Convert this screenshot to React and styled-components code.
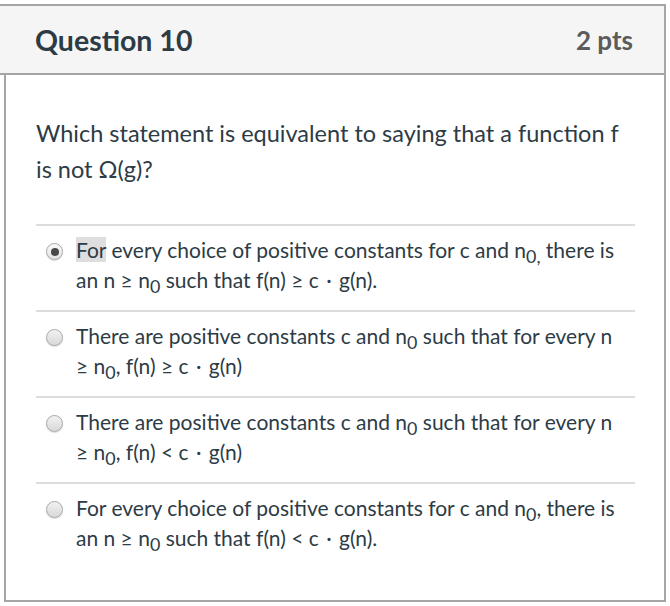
import React from "react";
import styled, { createGlobalStyle } from "styled-components";

const Global = createGlobalStyle`
  html, body { margin: 0; padding: 0; background: #fff; }
  body { font-family: Lato, "Open Sans", sans-serif; color: #2d3b45; }
  sub { font-size: 0.85em; vertical-align: -0.3em; line-height: 0; }
`;

const Page = styled.div`
  width: 670px;
  height: 606px;
  padding-top: 4px;
  box-sizing: border-box;
`;

const Card = styled.div`
  width: 666px;
  display: flex;
  flex-direction: column;
`;

const Header = styled.div`
  height: 67px;
  background: #f5f5f5;
  border-top: 2px solid #a5a5a5;
  border-right: 2px solid #a5a5a5;
  border-bottom: 2px solid #a5a5a5;
  display: flex;
  align-items: center;
  justify-content: space-between;
  padding: 0 31px 0 35px;
`;

const Title = styled.h2`
  margin: 0;
  font-size: 28.5px;
  font-weight: 700;
  color: #2d3b45;
`;

const Points = styled.div`
  font-size: 26px;
  font-weight: 700;
  color: #5b5b5b;
`;

const Body = styled.div`
  margin-left: 4px;
  height: 527px;
  border-left: 2px solid #a5a5a5;
  border-right: 2px solid #a5a5a5;
  border-bottom: 2px solid #a5a5a5;
  padding: 40px 29px 0 30px;
  box-sizing: border-box;
`;

const Prompt = styled.p`
  margin: 0 0 37px;
  font-size: 23.5px;
  line-height: 36px;
  color: #2d3b45;
`;

const Answer = styled.label`
  display: flex;
  align-items: flex-start;
  border-top: 2px solid #dcdcdc;
  padding: 9px 0 15px 10px;
`;

const Radio = styled.span`
  flex: none;
  width: 17px;
  height: 17px;
  margin-top: 8px;
  margin-right: 13px;
  border-radius: 50%;
  box-sizing: border-box;
  border: 1px solid #a8a8a8;
  background: linear-gradient(#f2f2f2, #d8d8d8);
  box-shadow: 0 1px 1px rgba(0,0,0,0.15);
  display: flex;
  align-items: center;
  justify-content: center;
  &::after {
    content: "";
    width: 8px;
    height: 8px;
    border-radius: 50%;
    background: #4a4a4a;
    display: ${(p) => (p.$checked ? "block" : "none")};
  }
  ${(p) => p.$checked && `background: linear-gradient(#fafafa, #e4e4e4);`}
`;

const AnswerText = styled.div`
  font-size: 21px;
  line-height: 30px;
  color: #2d3b45;
`;

const Highlight = styled.span`
  background: #dedede;
`;

const Dot = styled.span`
  margin: 0 2px;
  line-height: 0;
`;

const N0 = ({ comma }) => (
  <>n<sub>0{comma ? "," : ""}</sub></>
);

const Cg = () => (
  <>c <Dot>·</Dot> g(n)</>
);

export default function App() {
  return (
    <Page>
      <Global />
      <Card>
        <Header>
          <Title>Question 10</Title>
          <Points>2 pts</Points>
        </Header>
        <Body>
          <Prompt>
            Which statement is equivalent to saying that a function f is not Ω(g)?
          </Prompt>
          <Answer>
            <Radio $checked />
            <AnswerText>
              <Highlight>For</Highlight> every choice of positive constants for c and <N0 comma /> there is an n ≥ <N0 /> such that f(n) ≥ <Cg />.
            </AnswerText>
          </Answer>
          <Answer>
            <Radio />
            <AnswerText>
              There are positive constants c and <N0 /> such that for every n ≥{"\u00a0"}<N0 />, f(n) ≥ <Cg />
            </AnswerText>
          </Answer>
          <Answer>
            <Radio />
            <AnswerText>
              There are positive constants c and <N0 /> such that for every n ≥{"\u00a0"}<N0 />, f(n) &lt; <Cg />
            </AnswerText>
          </Answer>
          <Answer>
            <Radio />
            <AnswerText>
              For every choice of positive constants for c and <N0 />, there is an n ≥ <N0 /> such that f(n) &lt; <Cg />.
            </AnswerText>
          </Answer>
        </Body>
      </Card>
    </Page>
  );
}
